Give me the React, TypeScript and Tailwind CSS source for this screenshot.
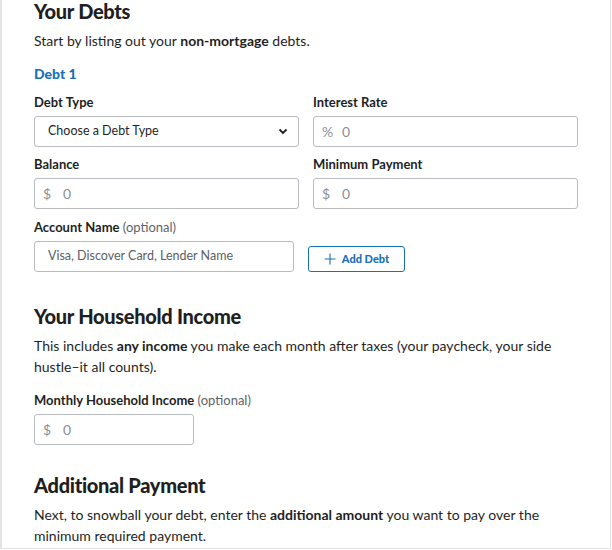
import React from "react"

function Label({ children, optional }: { children: React.ReactNode; optional?: boolean }) {
  return (
    <div className="mb-[5px] h-[17px] text-[13px] leading-[17px] font-bold text-[#1f1f1f]">
      {children}
      {optional && <span className="font-normal text-[#5f6368]"> (optional)</span>}
    </div>
  )
}

function PrefixInput({ prefix, width }: { prefix: string; width?: string }) {
  return (
    <div
      className={`flex h-[31px] items-center rounded-[3px] border border-[#b8bcc0] bg-white pl-[8px] text-[14px] ${width ?? "w-full"}`}
    >
      <span className="w-[20px] text-[#8a8f94]">{prefix}</span>
      <span className="text-[#8a8f94]">0</span>
    </div>
  )
}

export default function App() {
  return (
    <div
      className="h-[549px] w-[611px] overflow-hidden border-b border-l-2 border-r border-[#e3e3e3] bg-white text-[#1f1f1f]"
      style={{ fontFamily: "Lato, 'Open Sans', sans-serif" }}
    >
      <div className="ml-[32px] w-[544px]">
        <h2 className="text-[20px] leading-[22px] font-black tracking-[-0.3px]">Your Debts</h2>
        <p className="mt-[8px] text-[14px] leading-[21px]">
          Start by listing out your <b>non-mortgage</b> debts.
        </p>
        <div className="mt-[14px] text-[14px] leading-[18px] font-black text-[#1670b8]">Debt 1</div>

        <div className="mt-[11px] grid grid-cols-2 gap-x-[14px] gap-y-[9px]">
          <div>
            <Label>Debt Type</Label>
            <div className="flex h-[31px] items-center justify-between rounded-[3px] border border-[#b8bcc0] bg-white pl-[13px] pr-[10px] text-[12.5px]">
              <span>Choose a Debt Type</span>
              <svg width="10" height="7" viewBox="0 0 10 7" fill="none">
                <path d="M1.5 1.5L5 5L8.5 1.5" stroke="#1f1f1f" strokeWidth="1.8" />
              </svg>
            </div>
          </div>
          <div>
            <Label>Interest Rate</Label>
            <PrefixInput prefix="%" />
          </div>
          <div>
            <Label>Balance</Label>
            <PrefixInput prefix="$" />
          </div>
          <div>
            <Label>Minimum Payment</Label>
            <PrefixInput prefix="$" />
          </div>
        </div>

        <div className="mt-[10px]">
          <Label optional>Account Name</Label>
          <div className="flex items-end gap-[14px]">
            <div className="flex h-[31px] w-[260px] items-center rounded-[3px] border border-[#b8bcc0] bg-white pl-[13px] text-[12.5px] text-[#5a5f64]">
              Visa, Discover Card, Lender Name
            </div>
            <button className="flex h-[26px] w-[97px] items-center justify-center gap-[6px] rounded-[3px] border border-[#1670b8] bg-white text-[11px] font-black text-[#1670b8]">
              <svg width="12" height="12" viewBox="0 0 12 12" fill="none">
                <path d="M6 0.5V11.5M0.5 6H11.5" stroke="#1670b8" strokeWidth="1.1" />
              </svg>
              Add Debt
            </button>
          </div>
        </div>

        <h2 className="mt-[33px] text-[20px] leading-[22px] font-black tracking-[-0.3px]">Your Household Income</h2>
        <p className="mt-[8px] text-[14px] leading-[21px]">
          This includes <b>any income</b> you make each month after taxes (your paycheck, your side hustle–it all
          counts).
        </p>
        <div className="mt-[15px]">
          <Label optional>Monthly Household Income</Label>
          <PrefixInput prefix="$" width="w-[160px]" />
        </div>

        <h2 className="mt-[29px] text-[20px] leading-[22px] font-black tracking-[-0.3px]">Additional Payment</h2>
        <p className="mt-[8px] text-[14px] leading-[21px]">
          Next, to snowball your debt, enter the <b>additional amount</b> you want to pay over the minimum required
          payment.
        </p>
      </div>
    </div>
  )
}
